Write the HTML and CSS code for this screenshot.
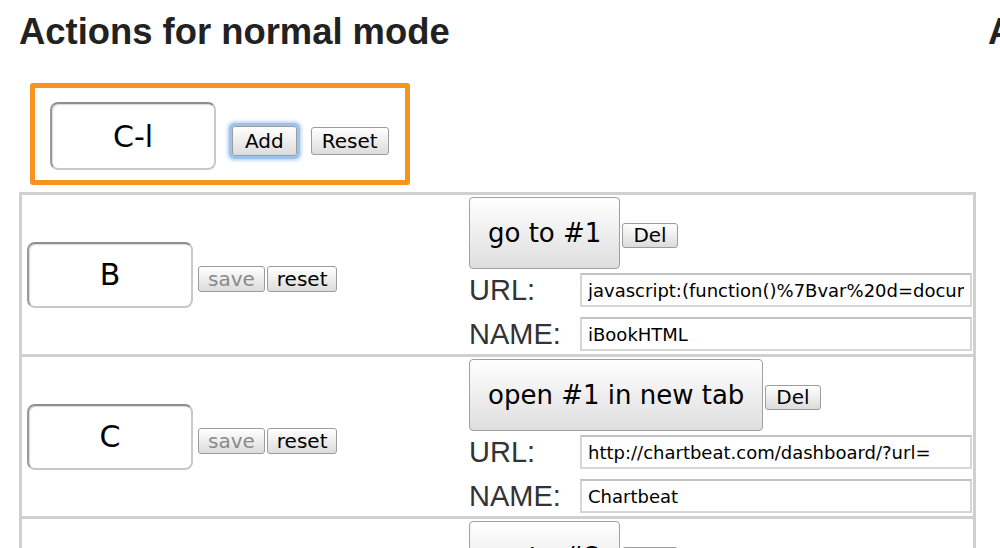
FILE: index.html
```html
<!DOCTYPE html>
<html lang="en">
  <head>
    <meta charset="utf-8" />
    <title>Key actions</title>
    <link rel="stylesheet" href="styles.css">
  </head>
  <body>
    <div class="page">
      <!-- normal mode column -->
      <section class="mode">
        <h1>Actions for normal mode</h1>
        <div class="new-key">
          <input class="key" type="text" value="C-l" />
          <button class="btn btn-add">Add</button>
          <button class="btn btn-reset">Reset</button>
        </div>
        <table class="actions">
          <tr>
            <td class="key-cell">
              <div class="key-row">
                <input class="key key-small" type="text" value="B" />
                <button class="btn btn-sm" disabled>save</button>
                <button class="btn btn-sm">reset</button>
              </div>
            </td>
            <td class="act-cell">
              <div class="act-head">
                <button class="act">go to #1</button>
                <button class="btn btn-del">Del</button>
              </div>
              <div class="fields">
                <span class="lbl">URL:</span>
                <input class="field" type="text" value="javascript:(function()%7Bvar%20d=document,s=d.createElement('script');" />
                <span class="lbl">NAME:</span>
                <input class="field" type="text" value="iBookHTML" />
              </div>
            </td>
          </tr>
          <tr>
            <td class="key-cell">
              <div class="key-row">
                <input class="key key-small" type="text" value="C" />
                <button class="btn btn-sm" disabled>save</button>
                <button class="btn btn-sm">reset</button>
              </div>
            </td>
            <td class="act-cell">
              <div class="act-head">
                <button class="act">open #1 in new tab</button>
                <button class="btn btn-del">Del</button>
              </div>
              <div class="fields">
                <span class="lbl">URL:</span>
                <input class="field" type="text" value="http://chartbeat.com/dashboard/?url=" />
                <span class="lbl">NAME:</span>
                <input class="field" type="text" value="Chartbeat" />
              </div>
            </td>
          </tr>
          <tr>
            <td class="key-cell"></td>
            <td class="act-cell">
              <div class="act-head">
                <button class="act">go to #2</button>
                <button class="btn btn-del">Del</button>
              </div>
            </td>
          </tr>
        </table>
      </section>

      <!-- insert mode column, mostly off screen -->
      <section class="mode mode-second">
        <h1>Actions for insert mode</h1>
      </section>
    </div>
  </body>
</html>
```

FILE: styles.css
```css
body {
  margin: 0;
  background: #ffffff;
  overflow: hidden;
  font-family: "DejaVu Sans", sans-serif;
  color: #000000;
}

.page {
  display: flex;
  gap: 12px;
  padding-left: 19px;
}

.mode {
  flex: 0 0 957px;
}

/* Big section title */
h1 {
  font-family: "Liberation Sans", Arial, sans-serif;
  font-size: 36.4px;
  line-height: 41px;
  font-weight: bold;
  color: #222222;
  margin: 11px 0 31px 0;
  white-space: nowrap;
}

/* Orange box with the new key */
.new-key {
  display: flex;
  align-items: center;
  width: fit-content;
  margin: 0 0 7px 11px;
  padding: 14px 16px 10px 15px;
  border: 5px solid #f7941d;
  border-radius: 3px;
}

.key {
  box-sizing: border-box;
  width: 166px;
  height: 68px;
  padding: 0;
  font-family: "DejaVu Sans", sans-serif;
  font-size: 30px;
  text-align: center;
  color: #000000;
  background: #ffffff;
  border: 2px solid #c8c8c8;
  border-top-color: #8e8e8e;
  border-left-color: #9a9a9a;
  border-radius: 8px;
  box-shadow: inset 1px 1px 1px rgba(0, 0, 0, 0.15);
  outline: none;
}

.key-small {
  height: 66px;
}

/* Small grey buttons */
.btn {
  font-family: "DejaVu Sans", sans-serif;
  font-size: 20px;
  line-height: 22px;
  color: #000000;
  background: linear-gradient(to bottom, #ffffff, #dcdcdc);
  border: 1px solid #9c9c9c;
  border-radius: 3px;
  margin: 0;
}

.btn-add {
  margin: 10px 0 0 16px;
  padding: 3px 12px;
  box-shadow: 0 0 0 3px #9cc3ec, 0 0 3px 5px #c3dbf5;
}

.btn-reset {
  margin: 10px 0 0 14px;
  padding: 2px 10px;
}

.btn-sm {
  padding: 1px 9px;
}

.btn-sm:disabled {
  color: #8a8a8a;
}

.btn-del {
  line-height: 21px;
  padding: 1px 10px;
  margin-left: 2px;
}

/* Table of bindings */
.actions {
  width: 957px;
  border: 3px solid #d0d0d0;
  border-spacing: 0;
}

.actions td {
  border-bottom: 3px solid #d0d0d0;
}

.key-cell {
  width: 435px;
  padding: 0 0 0 5px;
  vertical-align: middle;
}

.key-row {
  display: flex;
  align-items: center;
  gap: 2px;
}

.key-row .key {
  margin-right: 3px;
}

.key-row .btn {
  margin-top: 8px;
}

.act-cell {
  padding: 2px 1px 3px 7px;
  vertical-align: top;
}

.act-head {
  display: flex;
  align-items: baseline;
}

.act {
  font-family: "DejaVu Sans", sans-serif;
  font-size: 26px;
  line-height: 30px;
  padding: 20px 18px;
  color: #000000;
  background: linear-gradient(to bottom, #ffffff, #dedede);
  border: 1px solid #a0a0a0;
  border-radius: 4px;
  margin: 0;
}

.fields {
  display: grid;
  grid-template-columns: 111px 1fr;
  row-gap: 10px;
  align-items: center;
  margin-top: 4px;
}

.lbl {
  font-family: "Liberation Sans", Arial, sans-serif;
  font-size: 29px;
  color: #333333;
}

.field {
  box-sizing: border-box;
  width: 100%;
  height: 34px;
  padding: 0 6px;
  font-family: "DejaVu Sans", sans-serif;
  font-size: 18px;
  color: #000000;
  background: #ffffff;
  border: 2px solid #d6d6d6;
  border-top-color: #c2c2c2;
  outline: none;
}
```
